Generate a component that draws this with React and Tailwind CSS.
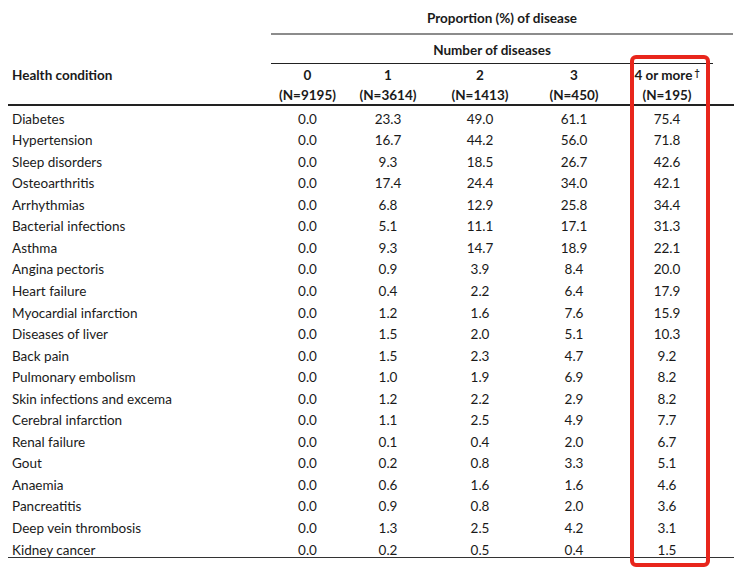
const rows = [
  ['Diabetes', '0.0', '23.3', '49.0', '61.1', '75.4'],
  ['Hypertension', '0.0', '16.7', '44.2', '56.0', '71.8'],
  ['Sleep disorders', '0.0', '9.3', '18.5', '26.7', '42.6'],
  ['Osteoarthritis', '0.0', '17.4', '24.4', '34.0', '42.1'],
  ['Arrhythmias', '0.0', '6.8', '12.9', '25.8', '34.4'],
  ['Bacterial infections', '0.0', '5.1', '11.1', '17.1', '31.3'],
  ['Asthma', '0.0', '9.3', '14.7', '18.9', '22.1'],
  ['Angina pectoris', '0.0', '0.9', '3.9', '8.4', '20.0'],
  ['Heart failure', '0.0', '0.4', '2.2', '6.4', '17.9'],
  ['Myocardial infarction', '0.0', '1.2', '1.6', '7.6', '15.9'],
  ['Diseases of liver', '0.0', '1.5', '2.0', '5.1', '10.3'],
  ['Back pain', '0.0', '1.5', '2.3', '4.7', '9.2'],
  ['Pulmonary embolism', '0.0', '1.0', '1.9', '6.9', '8.2'],
  ['Skin infections and excema', '0.0', '1.2', '2.2', '2.9', '8.2'],
  ['Cerebral infarction', '0.0', '1.1', '2.5', '4.9', '7.7'],
  ['Renal failure', '0.0', '0.1', '0.4', '2.0', '6.7'],
  ['Gout', '0.0', '0.2', '0.8', '3.3', '5.1'],
  ['Anaemia', '0.0', '0.6', '1.6', '1.6', '4.6'],
  ['Pancreatitis', '0.0', '0.9', '0.8', '2.0', '3.6'],
  ['Deep vein thrombosis', '0.0', '1.3', '2.5', '4.2', '3.1'],
  ['Kidney cancer', '0.0', '0.2', '0.5', '0.4', '1.5'],
]

const colW = ['w-[73px]', 'w-[88px]', 'w-[96px]', 'w-[92px]', 'w-[94px]']
const heads = [
  ['0', '(N=9195)'],
  ['1', '(N=3614)'],
  ['2', '(N=1413)'],
  ['3', '(N=450)'],
  ['4 or more', '(N=195)'],
]

export default function App() {
  return (
    <div className="relative w-[751px] h-[570px] bg-white text-[13.5px] text-[#1a1a1a] font-['Lato',sans-serif] overflow-hidden">
      <div className="ml-[8px] w-[726px]">
        <div className="ml-[263px] w-[462px] h-[35px] pt-[3px] flex items-center justify-center font-bold border-b-2 border-[#8c8c8c]">
          Proportion (%) of disease
        </div>
        <div className="ml-[263px] w-[442px] h-[29px] pt-[3px] flex items-center justify-center font-bold border-b border-[#222]">
          Number of diseases
        </div>
        <div className="flex h-[42px] font-bold border-b-2 border-[#222]">
          <div className="w-[263px] pl-[4px] h-[23px] flex items-center">Health condition</div>
          {heads.map((h, i) => (
            <div key={i} className={`${colW[i]} flex flex-col items-center`}>
              <div className="h-[23px] flex items-center">
                {h[0]}
                {i === 4 && <span className="text-[9px] ml-[2px] -mt-[6px]">†</span>}
              </div>
              <div className="h-[17px] flex items-center">{h[1]}</div>
            </div>
          ))}
        </div>
        <div className="h-[452px] pt-[2px] border-b border-[#333]">
          {rows.map((r) => (
            <div key={r[0]} className="flex h-[21.55px] items-center">
              <div className="w-[263px] pl-[4px]">{r[0]}</div>
              {r.slice(1).map((v, i) => (
                <div key={i} className={`${colW[i]} text-center`}>{v}</div>
              ))}
            </div>
          ))}
        </div>
      </div>
      <div className="absolute left-[630px] top-[55px] w-[80px] h-[512px] border-4 border-[#e8261c] rounded-md" />
    </div>
  )
}
